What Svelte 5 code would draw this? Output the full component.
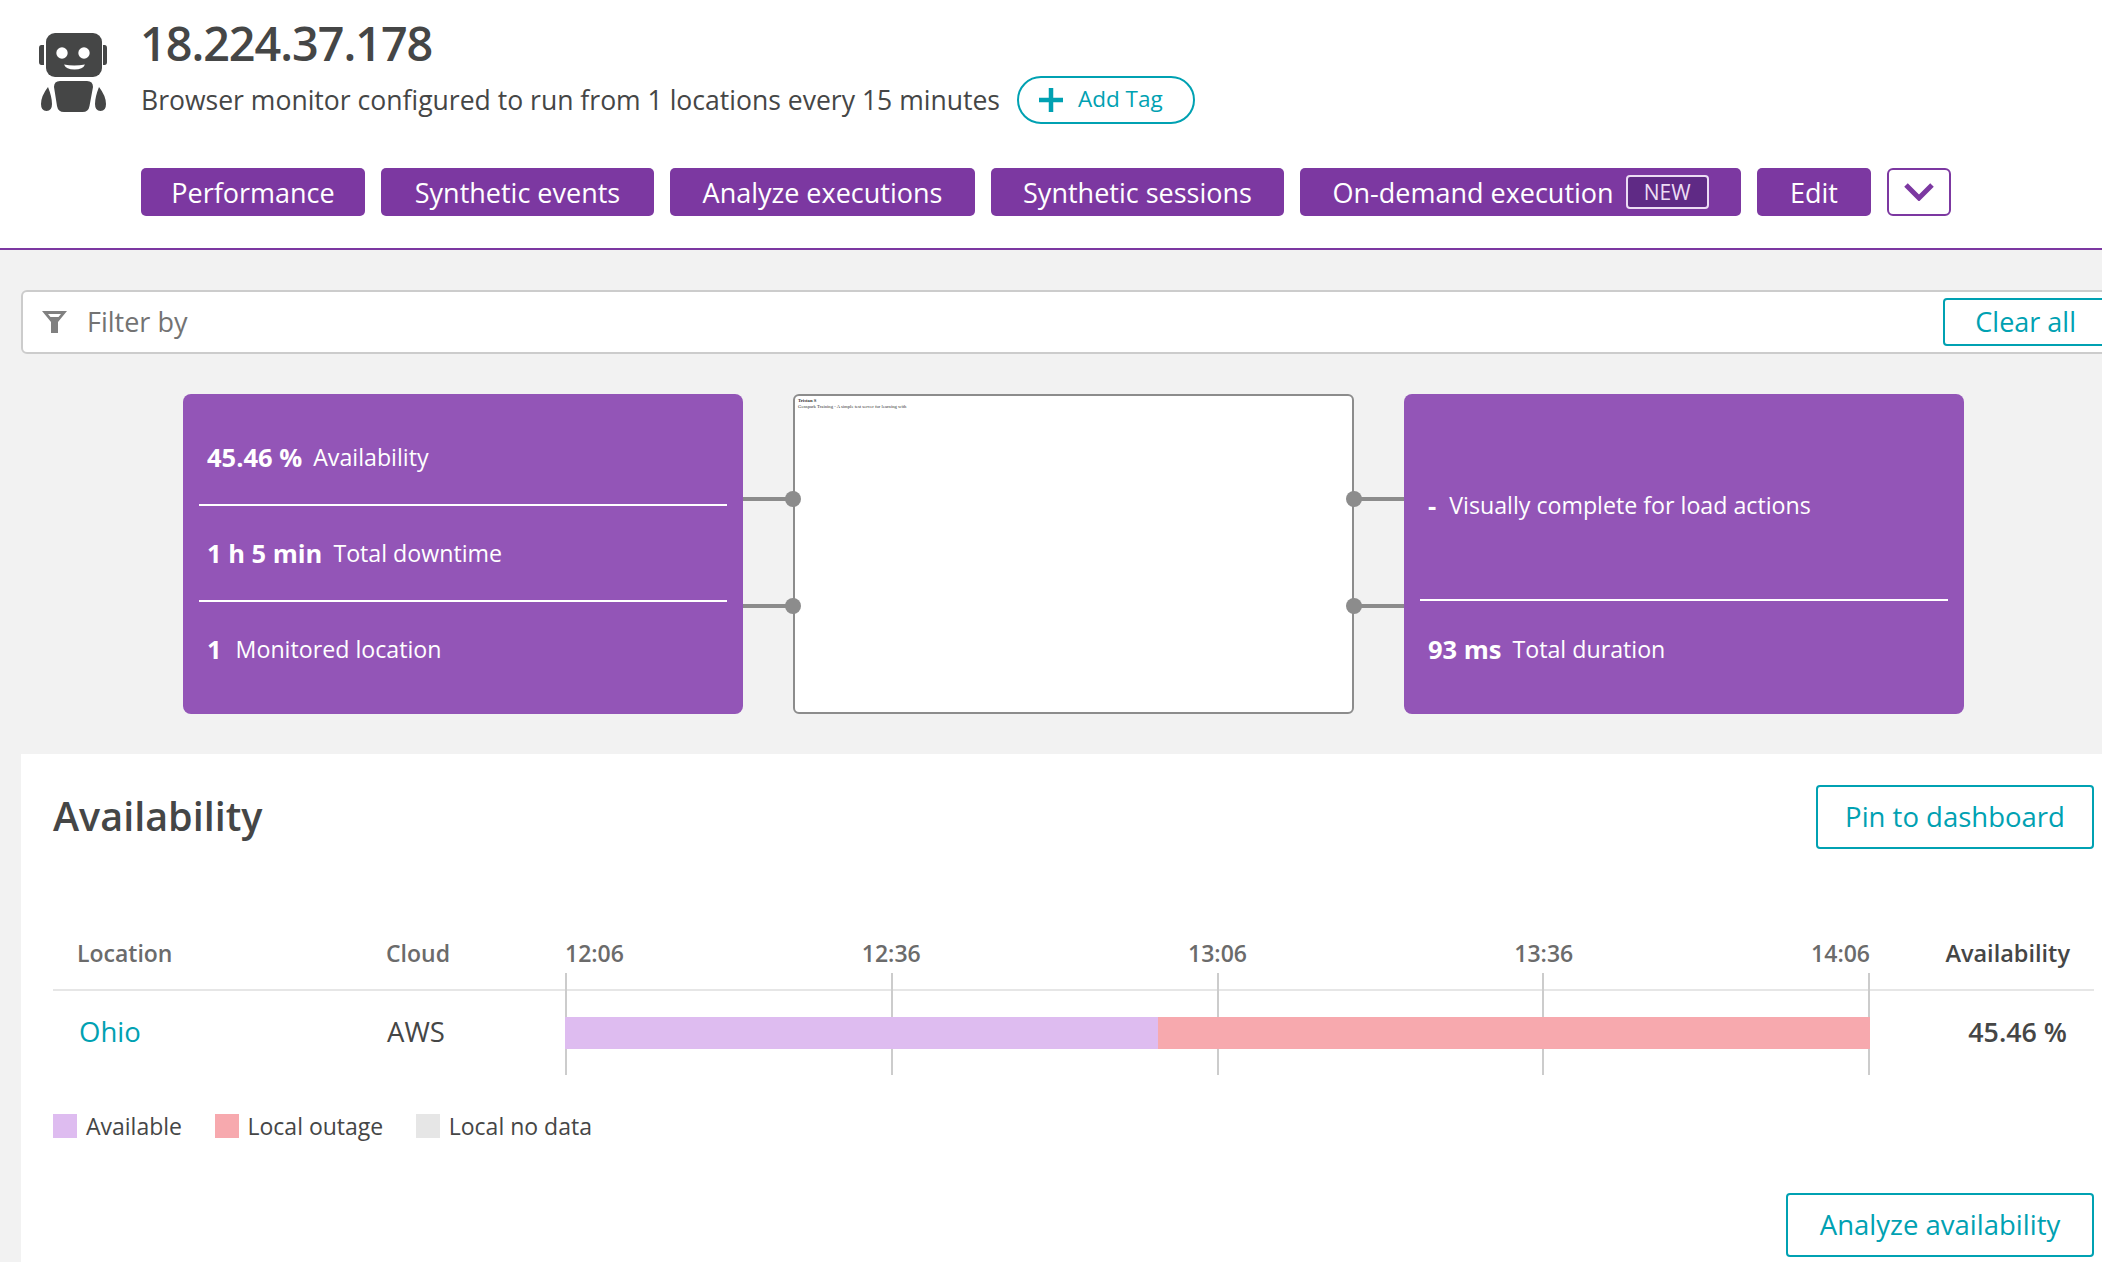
<script lang="ts">
  const actions = [
    { label: 'Performance', width: 224 },
    { label: 'Synthetic events', width: 273 },
    { label: 'Analyze executions', width: 305 },
    { label: 'Synthetic sessions', width: 293 },
    { label: 'On-demand execution', width: 441, tag: 'NEW' },
    { label: 'Edit', width: 114 }
  ];
  const ticks = [
    { t: '12:06', cls: 'first' },
    { t: '12:36', cls: '' },
    { t: '13:06', cls: '' },
    { t: '13:36', cls: '' },
    { t: '14:06', cls: 'last' }
  ];
  const availablePct = 45.46;
  const legend = [
    { label: 'Available', color: '#debcf0' },
    { label: 'Local outage', color: '#f7a9ae' },
    { label: 'Local no data', color: '#e6e6e6' }
  ];
</script>

<div class="page">
  <header class="head">
    <div class="top">
      <svg class="robot" viewBox="0 0 68 80" width="68" height="80">
        <rect x="7" y="0" width="56" height="44" rx="9" fill="#454646" />
        <path d="M5 12v20H2.500Q0 32 0 29V15q0-3 2.500-3zM64 12v20h1.500q2.500 0 2.500-3V15q0-3-2.500-3z" fill="#454646" />
        <circle cx="23" cy="20" r="5.700" fill="#fff" />
        <circle cx="45" cy="20" r="5.700" fill="#fff" />
        <path d="M25 31.500q10 2 21 0-2 5-10.500 5t-10.500-5z" fill="#fff" />
        <path d="M21 48h27q6 0 6 6l-3.500 19q-1 6-7 6H25q-6 0-7-6L15 54q0-6 6-6z" fill="#454646" />
        <path d="M9 54q4 10 4 17 0 7-5.500 7T2 71q0-8 7-17zM60 54q-4 10-4 17 0 7 5.500 7t5.500-7q0-8-7-17z" fill="#454646" />
      </svg>
      <div class="titles">
        <h1>18.224.37.178</h1>
        <div class="sub">
          <span>Browser monitor configured to run from 1 locations every 15 minutes</span>
          <button class="tag-btn">
            <svg viewBox="0 0 24 24" width="24" height="24"><path d="M12 0v24M0 12h24" stroke="#00a1b2" stroke-width="4.500" /></svg>
            <span class="tag-text">Add Tag</span>
          </button>
        </div>
      </div>
    </div>
    <nav class="actions">
      {#each actions as a}
        <button class="act" style="width:{a.width}px">
          {a.label}
          {#if a.tag}<span class="new">{a.tag}</span>{/if}
        </button>
      {/each}
      <button class="more" aria-label="More">
        <svg viewBox="0 0 30 18" width="30" height="18"><path d="M2 2l13 13L28 2" fill="none" stroke="#7c38a1" stroke-width="5" /></svg>
      </button>
    </nav>
  </header>

  <div class="filter">
    <svg viewBox="0 0 25 22" width="25" height="22"><path fill-rule="evenodd" d="M0 0h25l-9 11v11H9V11zM6 3l2.500 3h8L19 3z" fill="#808080" /></svg>
    <span class="filter-label">Filter by</span>
    <button class="clear">Clear all</button>
  </div>

  <section class="overview">
    <div class="card">
      <div class="stat"><b>45.46 %</b> Availability</div>
      <div class="stat"><b>1 h 5 min</b> Total downtime</div>
      <div class="stat"><b class="one">1</b> Monitored location</div>
    </div>
    <div class="links">
      <i></i><i></i>
    </div>
    <div class="thumb">
      <div class="thumb-title">Tristan S</div>
      <div class="thumb-line">Genspark Training - A simple test server for learning with</div>
    </div>
    <div class="links right">
      <i></i><i></i>
    </div>
    <div class="card">
      <div class="stat big"><b>-</b> Visually complete for load actions</div>
      <div class="stat"><b>93 ms</b> Total duration</div>
    </div>
  </section>

  <section class="panel">
    <div class="panel-head">
      <h2>Availability</h2>
      <button class="outline pin">Pin to dashboard</button>
    </div>

    <div class="row header">
      <div class="c-loc">Location</div>
      <div class="c-cloud">Cloud</div>
      <div class="c-time">
        {#each ticks as tk}<span class="tlabel {tk.cls}">{tk.t}</span>{/each}
      </div>
      <div class="c-av">Availability</div>
    </div>
    <div class="row body">
      <div class="c-loc"><a href="#ohio">Ohio</a></div>
      <div class="c-cloud">AWS</div>
      <div class="c-time">
        <div class="bar">
          <div class="ok" style="width:{availablePct}%"></div>
          <div class="out"></div>
        </div>
        <div class="grid">
          {#each ticks as tk}<em></em>{/each}
        </div>
      </div>
      <div class="c-av"><b>45.46 %</b></div>
    </div>

    <div class="legend">
      {#each legend as l}
        <span class="leg"><i style="background:{l.color}"></i>{l.label}</span>
      {/each}
    </div>

    <div class="foot">
      <button class="outline analyze">Analyze availability</button>
    </div>
  </section>
</div>

<style>
  :global(body) { margin: 0; background: #f2f2f2; overflow: hidden; }
  .page {
    width: 2102px; height: 1262px; overflow: hidden;
    font-family: "Open Sans", "Noto Sans", sans-serif; color: #454646;
  }
  button { font-family: inherit; cursor: pointer; }

  .head { background: #fff; height: 248px; border-bottom: 2px solid #7c38a1; }
  .top { display: flex; gap: 34px; padding: 33px 0 0 39px; height: 168px; box-sizing: border-box; }
  .robot { flex: none; }
  h1 { margin: -20px 0 0 -1px; font-size: 46.700px; line-height: 60px; font-weight: 600; letter-spacing: -1px; }
  .sub { display: flex; align-items: center; gap: 17px; font-size: 26.550px; margin-top: 3px; }
  .tag-btn {
    display: flex; align-items: center; gap: 15px;
    height: 48px; padding: 0 30px 0 20px; background: #fff;
    border: 2px solid #00a1b2; border-radius: 24px;
    color: #00a1b2; font-size: 22.500px;
  }
  .tag-text { margin-top: -3px; }
  .actions { display: flex; gap: 16px; padding-left: 141px; }
  .act {
    display: flex; align-items: center; justify-content: center; gap: 12px; flex: none;
    height: 48px; padding: 0; border: 0; border-radius: 5px;
    background: #7c38a1; color: #fff; font-size: 27px;
  }
  .new {
    display: block; padding: 0 16px; height: 34px; line-height: 30px; box-sizing: border-box;
    border: 2px solid #ecdcf4; border-radius: 4px;
    background: #5f2a85; color: #ecdcf4; font-size: 21px;
  }
  .more {
    display: flex; align-items: center; justify-content: center;
    width: 64px; height: 48px; padding: 0; background: #fff;
    border: 2px solid #7c38a1; border-radius: 6px;
  }

  .filter {
    display: flex; align-items: center; gap: 20px;
    margin: 40px 0 0 21px; width: 2120px; height: 64px; box-sizing: border-box; padding: 0 0 0 19px;
    background: #fff; border: 2px solid #ccc; border-radius: 6px;
  }
  .filter-label { font-size: 27px; color: #737373; margin-top: -2px; }
  .clear {
    margin-left: auto; margin-right: 29px; height: 48px; padding: 0 32px 2px 30px; background: #fff;
    border: 2px solid #00a1b2; border-radius: 4px; color: #00a1b2; font-size: 27px;
  }

  .overview { display: flex; margin: 40px 0 0 183px; width: 1781px; height: 320px; }
  .card {
    display: flex; flex-direction: column; box-sizing: border-box;
    width: 560px; padding: 14px 16px 18px; background: #9355b7; border-radius: 8px; color: #fff;
  }
  .stat {
    flex: 1; display: flex; align-items: center; gap: 11px; padding-left: 8px;
    border-top: 2px solid #fff; font-size: 23.200px;
  }
  .stat:first-child { border-top: 0; padding-top: 2px; }
  .stat.big { flex: 2; gap: 13px; }
  .stat b { font-size: 25.500px; font-weight: 700; }
  .stat b.one { margin-right: 3px; }
  .links { width: 50px; position: relative; z-index: 1; }
  .links i { position: absolute; left: 0; width: 50px; height: 4px; background: #8c8c8c; }
  .links i:nth-child(1) { top: 103px; }
  .links i:nth-child(2) { top: 210px; }
  .links i::after {
    content: ""; position: absolute; right: -8px; top: -6px;
    width: 16px; height: 16px; border-radius: 50%; background: #8c8c8c;
  }
  .links.right i::after { right: auto; left: -8px; }
  .thumb {
    width: 561px; box-sizing: border-box; padding: 2px 3px;
    background: #fff; border: 2px solid #8c8c8c; border-radius: 6px;
    font-family: "Liberation Serif", serif; font-size: 4.700px; line-height: 6px; color: #333;
  }
  .thumb-title { font-weight: 700; }

  .panel {
    margin: 40px 0 0 21px; height: 520px; padding: 0 8px 0 32px;
    background: #fff;
  }
  .panel-head { display: flex; justify-content: space-between; align-items: flex-start; padding-top: 31px; height: 174px; box-sizing: border-box; }
  h2 { margin: 1px 0 0; font-size: 39.500px; font-weight: 600; line-height: 60px; }
  .outline {
    height: 64px; padding: 0 0 2px; background: #fff;
    border: 2px solid #00a1b2; border-radius: 4px; color: #00a1b2; font-size: 27.500px;
  }
  .pin { width: 278px; }
  .analyze { width: 308px; }

  .row { display: flex; }
  .row.header {
    height: 50px; padding-bottom: 11px; align-items: center;
    font-size: 23px; font-weight: 600; color: #6b6b6b; border-bottom: 2px solid #e6e6e6;
  }
  .row.body { height: 84px; align-items: center; font-size: 27.500px; }
  .c-loc { width: 333px; padding-left: 24px; box-sizing: border-box; }
  .body .c-loc { padding-left: 26px; margin-top: -3px; }
  .c-cloud { width: 179px; }
  .body .c-cloud { padding-left: 1px; width: 178px; margin-top: -3px; }
  .c-time { width: 1305px; flex: none; position: relative; }
  .c-av { flex: 1; text-align: right; padding-right: 24px; }
  .header .c-av { color: #454646; font-size: 23.500px; }
  .body .c-av { padding-right: 27px; margin-top: -3px; }
  .c-av b { font-weight: 600; font-size: 26.800px; }
  a { color: #00a1b2; text-decoration: none; }

  .header .c-time { display: flex; justify-content: space-between; }
  .tlabel { width: 0; display: flex; justify-content: center; white-space: nowrap; }
  .tlabel.first { justify-content: flex-start; }
  .tlabel.last { justify-content: flex-end; }

  .bar { display: flex; height: 32px; position: relative; z-index: 1; }
  .ok { background: #debcf0; }
  .out { flex: 1; background: #f7a9ae; }
  .grid {
    position: absolute; left: 0; right: 0; top: -44px; height: 102px;
    display: flex; justify-content: space-between;
  }
  .grid em { display: block; width: 2px; background: #ccc; }

  .legend { display: flex; gap: 32.500px; margin-top: 35px; font-size: 23px; }
  .leg { display: flex; align-items: center; gap: 9px; }
  .leg i { display: block; width: 24px; height: 24px; }

  .foot { display: flex; justify-content: flex-end; margin-top: 51px; }
</style>
